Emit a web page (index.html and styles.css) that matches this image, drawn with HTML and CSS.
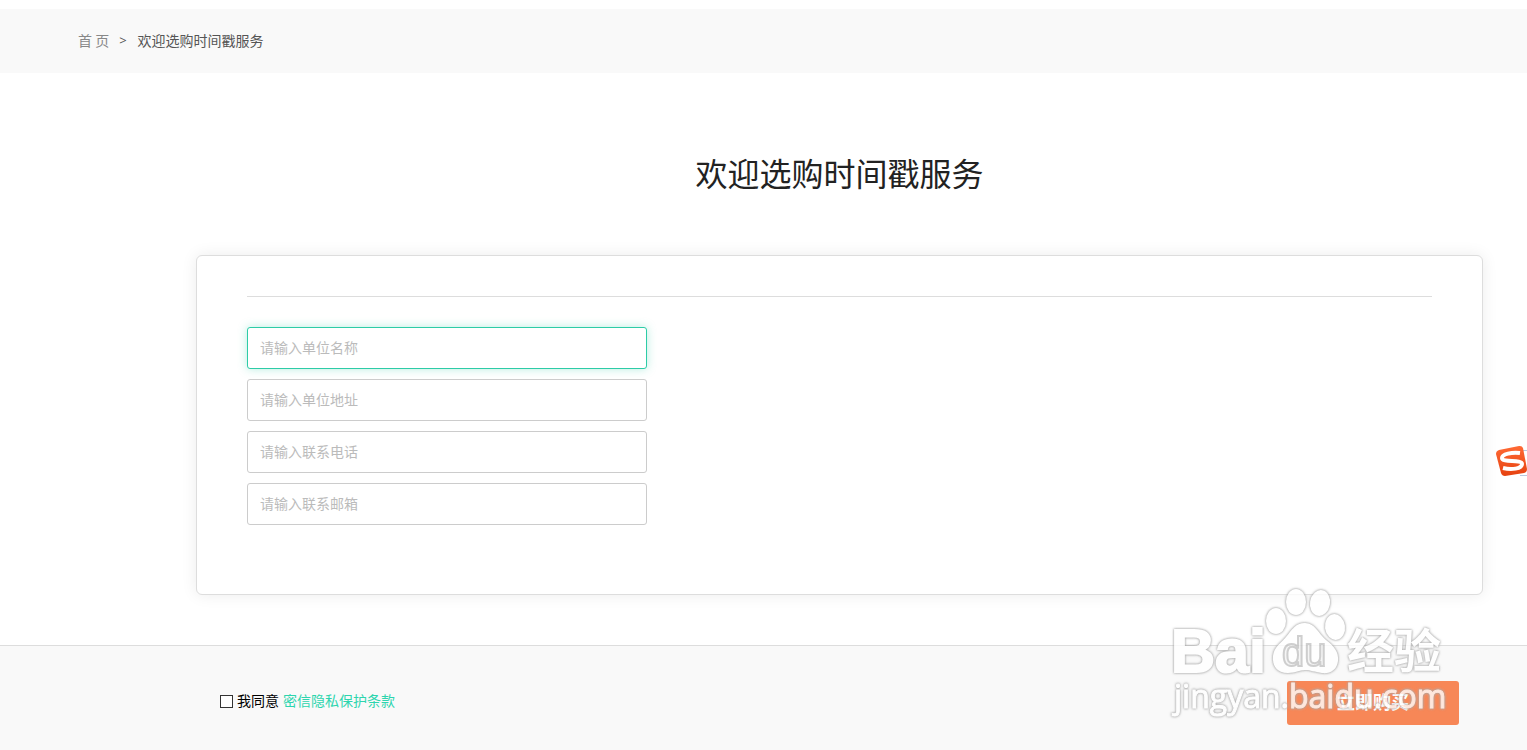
FILE: index.html
```
<!DOCTYPE html>
<html lang="zh-CN">
<head>
    <meta charset="UTF-8">
    <meta name="viewport" content="width=device-width, initial-scale=1.0">
    <title>欢迎选购时间戳服务</title>
    <link rel="stylesheet" href="styles.css">
</head>
<body>
    <nav class="breadcrumb">
        <a href="#">首 页</a>
        <span class="separator">&gt;</span>
        <span>欢迎选购时间戳服务</span>
    </nav>

    <main class="content">
        <h1>欢迎选购时间戳服务</h1>

        <form class="card" id="orderForm">
            <hr>
            <div class="fields">
                <input class="active" type="text" name="company" placeholder="请输入单位名称" aria-label="单位名称">
                <input type="text" name="address" placeholder="请输入单位地址" aria-label="单位地址">
                <input type="tel" name="phone" placeholder="请输入联系电话" aria-label="联系电话">
                <input type="email" name="email" placeholder="请输入联系邮箱" aria-label="联系邮箱">
            </div>
        </form>
    </main>

    <footer class="bottom-bar">
        <div class="agree">
            <input type="checkbox" id="agree" form="orderForm">
            <label for="agree">我同意</label>
            <a href="#">密信隐私保护条款</a>
        </div>
        <button class="buy-button" type="submit" form="orderForm">立即购买</button>
    </footer>

    <!-- Input method badge -->
    <div class="ime-badge">
        <svg width="32" height="34" viewBox="0 0 32 34">
            <defs>
                <linearGradient id="imeFill" x1="0" y1="0" x2="0" y2="1">
                    <stop offset="0" stop-color="#ff6a35"/>
                    <stop offset="1" stop-color="#e64210"/>
                </linearGradient>
            </defs>
            <path d="M25 6.500H32M25 31.500H32" stroke="#b9c9e0"/>
            <path d="M4 6L24 2Q27 1.500 28 4L32 25Q32 28 29 29L10 32Q7 32 6 29L1 10Q1 7 4 6Z" fill="url(#imeFill)"/>
            <path d="M25 9C17 8 7 10 7 14C7 19 27 15 27 20C27 25 16 26 8 24" fill="none" stroke="#fff" stroke-width="4"/>
        </svg>
    </div>

    <!-- Watermark -->
    <svg class="watermark" width="290" height="145" viewBox="0 0 290 145">
        <text class="mark-bai" x="7" y="92">Bai</text>
        <ellipse cx="112" cy="41" rx="10" ry="13"/>
        <ellipse cx="132" cy="22" rx="10" ry="13"/>
        <ellipse cx="156" cy="23" rx="10" ry="13" transform="rotate(10 156 23)"/>
        <ellipse cx="171" cy="47" rx="10" ry="13" transform="rotate(-8 171 47)"/>
        <path d="M141 43C151 43 154 53 162 60C170 66 175 72 174 81C173 90 166 94 158 93C150 92 147 90 141 90C135 90 132 93 124 93C113 93 108 86 109 76C110 67 116 64 122 57C128 50 131 43 141 43Z"/>
        <text class="mark-du" x="118" y="86">du</text>
        <text class="mark-cn" x="183" y="88">经验</text>
        <text class="mark-url" x="10" y="128">jingyan.baidu.com</text>
    </svg>
</body>
</html>
```
FILE: styles.css
```
* {
    box-sizing: border-box;
}
body {
    margin: 0;
    padding-top: 9px;
    min-height: 100vh;
    display: flex;
    flex-direction: column;
    font-family: "Noto Sans CJK SC", sans-serif;
    font-size: 14px;
    line-height: 20px;
    color: #000;
    background-color: #fff;
}
a {
    text-decoration: none;
}
.breadcrumb {
    display: flex;
    align-items: center;
    height: 64px;
    padding: 0 78px 2px;
    color: #555;
    background-color: #f9f9f9;
}
.breadcrumb a {
    color: #888;
}
.separator {
    margin: 0 11px 0 10px;
    font-family: "Open Sans", sans-serif;
    font-size: 13px;
}
.content {
    margin: 0 44px 50px 196px;
}
h1 {
    margin: 75px 0 59px;
    font-size: 32px;
    font-weight: 400;
    line-height: 48px;
    text-align: center;
    color: #222;
}
.card {
    padding: 40px 50px 69px;
    border: 1px solid #ddd;
    border-radius: 6px;
    background-color: #fff;
    box-shadow: 0 0 16px rgba(0, 0, 0, 0.08);
}
.card hr {
    margin: 0 0 30px;
    border: 0;
    border-top: 1px solid #ddd;
}
.fields {
    display: flex;
    flex-direction: column;
    gap: 10px;
    max-width: 400px;
}
.fields input {
    height: 42px;
    padding: 0 12px 2px;
    border: 1px solid #ccc;
    border-radius: 3px;
    outline: none;
    font: inherit;
    background-color: #fff;
}
.fields input::placeholder {
    color: #bbb;
}
.fields input.active,
.fields input:focus {
    border-color: #2dcca7;
    box-shadow: 0 0 10px rgba(45, 204, 167, 0.35);
}
.bottom-bar {
    flex: 1;
    display: flex;
    justify-content: space-between;
    align-items: flex-start;
    padding: 35px 68px 25px 220px;
    border-top: 1px solid #ddd;
    background-color: #f9f9f9;
}
.agree {
    display: flex;
    align-items: center;
    gap: 4px;
    height: 40px;
}
.agree input {
    appearance: none;
    width: 13px;
    height: 13px;
    margin: 0;
    border: 1px solid #333;
    background-color: #fff;
}
.agree input:checked {
    background-color: #2dd5ae;
}
.agree label,
.agree a {
    padding-bottom: 2px;
}
.agree a {
    color: #2dd5ae;
}
.buy-button {
    width: 172px;
    height: 44px;
    padding: 0 0 4px;
    border: none;
    border-radius: 3px;
    font: inherit;
    font-size: 18px;
    font-weight: 700;
    color: #fff;
    background-color: #f78757;
    cursor: pointer;
}
.ime-badge {
    position: fixed;
    top: 444px;
    right: 0;
    height: 34px;
}
.watermark {
    position: fixed;
    right: 73px;
    bottom: 25px;
    fill: #fff;
    opacity: 0.8;
    filter: drop-shadow(0 0 1px #999) drop-shadow(0 0 1px #bbb);
    pointer-events: none;
}
.mark-bai {
    font: 700 61px "Liberation Sans", sans-serif;
    stroke: #fff;
    stroke-width: 2px;
}
.mark-du {
    font: 400 40px "Liberation Sans", sans-serif;
    fill: #f4f4f4;
    stroke: #c4c4c4;
    stroke-width: 2px;
}
.mark-cn {
    font: 700 47px "Noto Sans CJK SC", sans-serif;
}
.mark-url {
    font: 400 32px "Open Sans", sans-serif;
    stroke: #fff;
    stroke-width: 1px;
}
```
